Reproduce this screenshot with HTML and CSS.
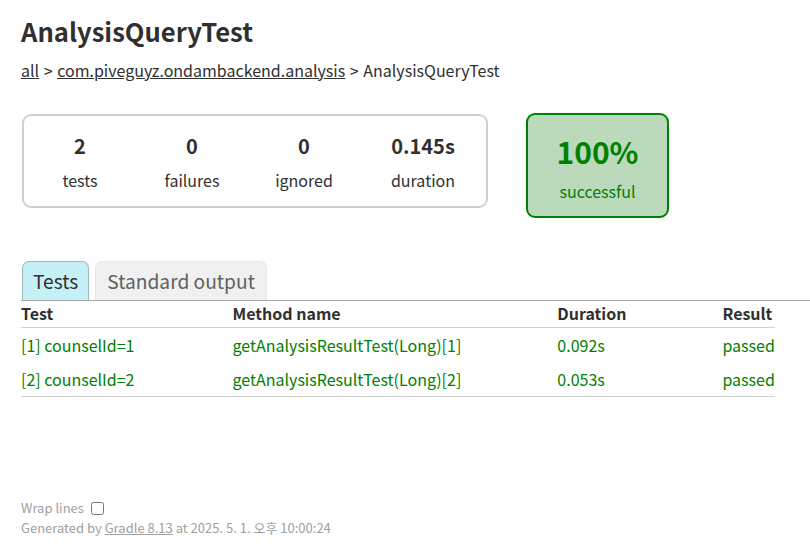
FILE: index.html
```html
<!DOCTYPE html>
<html lang="en">
<head>
<meta charset="UTF-8">
<title>Test results - AnalysisQueryTest</title>
<link rel="stylesheet" href="styles.css">
</head>
<body>
<div class="content">
  <h1 class="title">AnalysisQueryTest</h1>
  <div class="breadcrumbs">
    <a href="#" class="crumb">all</a><span class="sep"> &gt; </span><a href="#" class="crumb">com.piveguyz.ondambackend.analysis</a><span class="sep"> &gt; </span>AnalysisQueryTest
  </div>

  <div class="summary-row">
    <div class="summary">
      <div class="info-box">
        <div class="counter">2</div>
        <p class="info-label">tests</p>
      </div>
      <div class="info-box">
        <div class="counter">0</div>
        <p class="info-label">failures</p>
      </div>
      <div class="info-box">
        <div class="counter">0</div>
        <p class="info-label">ignored</p>
      </div>
      <div class="info-box info-box-wide">
        <div class="counter">0.145s</div>
        <p class="info-label">duration</p>
      </div>
    </div>
    <div class="success-box">
      <div class="percent">100%</div>
      <p class="success-label">successful</p>
    </div>
  </div>

  <div class="tab-container">
    <ul class="tab-links">
      <li class="tab-link selected"><a href="#">Tests</a></li>
      <li class="tab-link"><a href="#">Standard output</a></li>
    </ul>
    <div class="tab">
      <table class="results">
        <thead>
          <tr>
            <th>Test</th>
            <th>Method name</th>
            <th>Duration</th>
            <th>Result</th>
          </tr>
        </thead>
        <tbody>
          <tr class="success">
            <td>[1] counselId=1</td>
            <td>getAnalysisResultTest(Long)[1]</td>
            <td>0.092s</td>
            <td>passed</td>
          </tr>
          <tr class="success">
            <td>[2] counselId=2</td>
            <td>getAnalysisResultTest(Long)[2]</td>
            <td>0.053s</td>
            <td>passed</td>
          </tr>
        </tbody>
      </table>
    </div>
  </div>

  <div class="footer">
    <p class="wrap-toggle">
      <label class="wrap-label" for="line-wrapping-toggle">Wrap lines</label>
      <input type="checkbox" id="line-wrapping-toggle" class="wrap-checkbox">
    </p>
    <p class="generated">Generated by <a href="#" class="footer-link">Gradle 8.13</a> at 2025. 5. 1. 오후 10:00:24</p>
  </div>
</div>
</body>
</html>
```

FILE: styles.css
```css
html, body {
  margin: 0;
  padding: 0;
  background: #ffffff;
}

body {
  font-family: "Noto Sans CJK KR", "Noto Sans", sans-serif;
  font-size: 16px;
  line-height: 23px;
  color: #303030;
}

a, a:visited {
  color: #303030;
}

.content {
  padding: 13px 0 0 21px;
}

.title {
  margin: 0;
  font-size: 25.6px;
  line-height: 36px;
  font-weight: 700;
  white-space: nowrap;
}

.breadcrumbs {
  margin-top: 10px;
  white-space: nowrap;
}

.sep {
  margin: 0 1px;
}

.summary-row {
  display: flex;
  align-items: flex-start;
  gap: 38px;
  margin-top: 31px;
  padding-left: 1px;
}

.summary {
  display: flex;
  margin-top: 1px;
  height: 90px;
  border: 2px solid #d0d0d0;
  border-radius: 9px;
  align-items: flex-start;
}

.info-box {
  width: 112px;
  padding-top: 17px;
  text-align: center;
}

.info-box-wide {
  width: 126px;
}

.counter {
  font-size: 20px;
  line-height: 26px;
  font-weight: 700;
}

.info-label {
  margin: 10px 0 0;
}

.success-box {
  box-sizing: border-box;
  width: 143px;
  height: 105px;
  padding-top: 18px;
  border: 2px solid #008000;
  border-radius: 9px;
  background: #bbd9bb;
  color: #008000;
  text-align: center;
}

.percent {
  font-size: 30px;
  line-height: 36px;
  font-weight: 700;
}

.success-label {
  margin: 11px 0 0;
}

.tab-container {
  margin-top: 43px;
}

.tab-links {
  display: flex;
  gap: 6px;
  margin: 0;
  padding: 0 0 0 1px;
  list-style: none;
  min-width: 788px;
  border-bottom: 1px solid #a8a8a8;
}

.tab-link {
  padding: 0 11px;
  height: 38px;
  display: flex;
  align-items: center;
  border: 1px solid #e8e8e8;
  border-bottom: none;
  border-radius: 7px 7px 0 0;
  background: #f0f0f0;
}

.tab-link.selected {
  padding: 0 10px;
  background: #c5f0f5;
  border-color: #a0b8bc;
}

.tab-link a {
  font-size: 19.2px;
  line-height: 26px;
  text-decoration: none;
  color: #606060;
}

.tab-link.selected a {
  color: #303030;
}

.results {
  border-collapse: collapse;
  border-bottom: 1px solid #d0d0d0;
}

.results th {
  text-align: left;
  white-space: nowrap;
  font-weight: 700;
  padding: 1px 0 2px 96px;
  border-bottom: 1px solid #d0d0d0;
}

.results td {
  white-space: nowrap;
  padding: 6px 0 5px 96px;
}

.results th:first-child,
.results td:first-child {
  padding-left: 0;
  padding-right: 2px;
}

.success td {
  color: #008000;
}

.footer {
  margin-top: 101px;
  font-size: 13px;
  line-height: 20px;
  color: #a0a0a0;
  white-space: nowrap;
}

.footer p {
  margin: 0;
}

.wrap-toggle {
  display: flex;
  align-items: center;
  gap: 5px;
}

.wrap-checkbox {
  margin: 0 0 0 2px;
  width: 13px;
  height: 13px;
}

.generated {
  margin-top: 3px;
}

.footer-link, .footer-link:visited {
  color: #a0a0a0;
}
```
